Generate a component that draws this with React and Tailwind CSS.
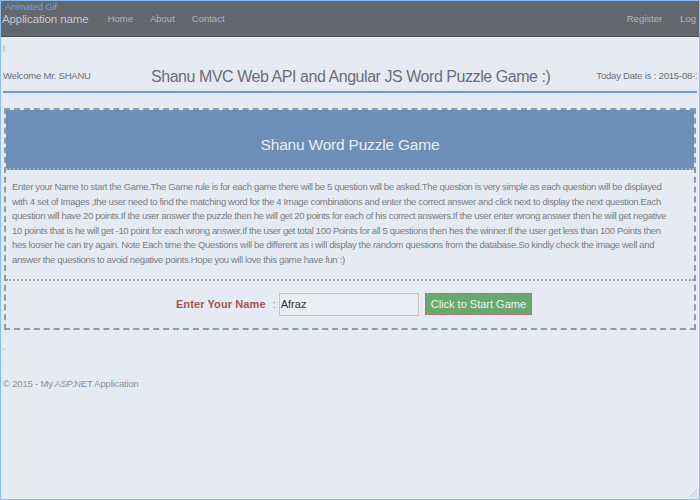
import React, { useState } from 'react';

const rules = [
    'Enter your Name to start the Game.The Game rule is for each game there will be 5 question will be asked.The question is very simple as each question will be displayed',
    'with 4 set of Images ,the user need to find the matching word for the 4 Image combinations and enter the correct answer and click next to display the next question.Each',
    'question will have 20 points.If the user answer the puzzle then he will get 20 points for each of his correct answers.If the user enter wrong answer then he will get negative',
    '10 points that is he will get -10 point for each wrong answer.If the user get total 100 Points for all 5 questions then hes the winner.If the user get less than 100 Points then',
    'hes looser he can try again. Note Each time the Questions will be different as i will display the random questions from the database.So kindly check the image well and',
    'answer the questions to avoid negative points.Hope you will love this game have fun :)',
];

const App = () => {
    const [name, setName] = useState('Afraz');

    return (
        <div className="w-[700px] h-[500px] overflow-hidden border border-[#8cbbec] bg-[#e6ebf3] font-['Liberation_Sans',Arial,sans-serif] relative">
            {/* navbar */}
            <div className="h-[36px] bg-[#63676e] border-b border-[#4d5056] flex items-center relative">
                <span className="absolute left-[4px] top-[2px] text-[9px] leading-none text-[#6fa3e6]">Animated Gif</span>
                <span className="ml-[1px] mt-[2px] text-[11.5px] tracking-[-0.1px] text-[#c6c8cc]">Application name</span>
                <nav className="flex gap-[17px] ml-[19px] mt-[2px] text-[9.5px] text-[#b3b6bc]">
                    <a>Home</a>
                    <a>About</a>
                    <a>Contact</a>
                </nav>
                <div className="ml-auto flex gap-[18px] mt-[2px] mr-[-7px] text-[9.5px] text-[#b3b6bc] whitespace-nowrap">
                    <a>Register</a>
                    <a>Log in</a>
                </div>
            </div>

            <div className="px-[2px]">
                <div className="h-[24px] pt-[7px] text-[7px] leading-none text-[#999]">|</div>

                {/* title row */}
                <div className="h-[32px] flex items-center border-b-2 border-[#6f9bd8] overflow-hidden">
                    <span className="w-[148px] shrink-0 text-[9.5px] tracking-[-0.2px] text-[#6b6e73]">Welcome Mr. SHANU</span>
                    <h1 className="shrink-0 whitespace-nowrap text-[16px] tracking-[-0.45px] text-[#6b6e73] mt-[2px]">Shanu MVC Web API and Angular JS Word Puzzle Game :)</h1>
                    <span className="ml-[46px] shrink-0 whitespace-nowrap text-[9.5px] tracking-[-0.2px] text-[#6b6e73]">Today Date is : 2015-08-18</span>
                </div>

                {/* game box */}
                <div className="mt-[15px] mx-[1px] border-2 border-dashed border-[#8f9aa8]">
                    <div className="h-[60px] bg-[#6b8fb6] flex items-center justify-center border-b-2 border-dotted border-[#a3acb8]">
                        <h2 className="text-[15.5px] tracking-[-0.2px] text-[#e8eef7] mt-[12px]">Shanu Word Puzzle Game</h2>
                    </div>
                    <div className="px-[6px] pt-[10px] pb-[11px] border-b-2 border-dotted border-[#9ba4b0] text-[9.5px] leading-[14.6px] tracking-[-0.35px] text-[#7a7d82] whitespace-nowrap">
                        {rules.map((line, i) => (
                            <div key={i}>{line}</div>
                        ))}
                    </div>
                    <div className="h-[47px] flex items-center justify-center pl-[8px]">
                        <label className="text-[11px] font-bold tracking-[0.1px] text-[#a4534f]">Enter Your Name</label>
                        <span className="ml-[7px] mr-[3px] text-[11px] text-[#8a8d92]">:</span>
                        <input
                            className="w-[140px] h-[23px] border border-[#c9c6c0] bg-[#e9edf4] px-[1px] text-[11px] text-[#333] outline-none"
                            value={name}
                            onChange={(e) => setName(e.target.value)}
                        />
                        <button className="ml-[6px] h-[22px] px-[5px] bg-[#6aa96e] border border-dashed border-[#e05482] text-[11px] text-[#eef4ee]">
                            Click to Start Game
                        </button>
                    </div>
                </div>

                <div className="h-[34px] pt-[15px] text-[7px] leading-none text-[#aaa]">▫</div>
                <div className="border-t border-[#e2e8f1] pt-[12px] text-[9.5px] tracking-[-0.2px] text-[#8b8f96]">© 2015 - My ASP.NET Application</div>
            </div>

            <svg className="absolute right-[1px] bottom-[1px]" width="10" height="10" viewBox="0 0 10 10">
                <path d="M9 2 L2 9 M9 5 L5 9 M9 8 L8 9" stroke="#b9c6d6" strokeWidth="1" />
            </svg>
        </div>
    );
};

export default App;
